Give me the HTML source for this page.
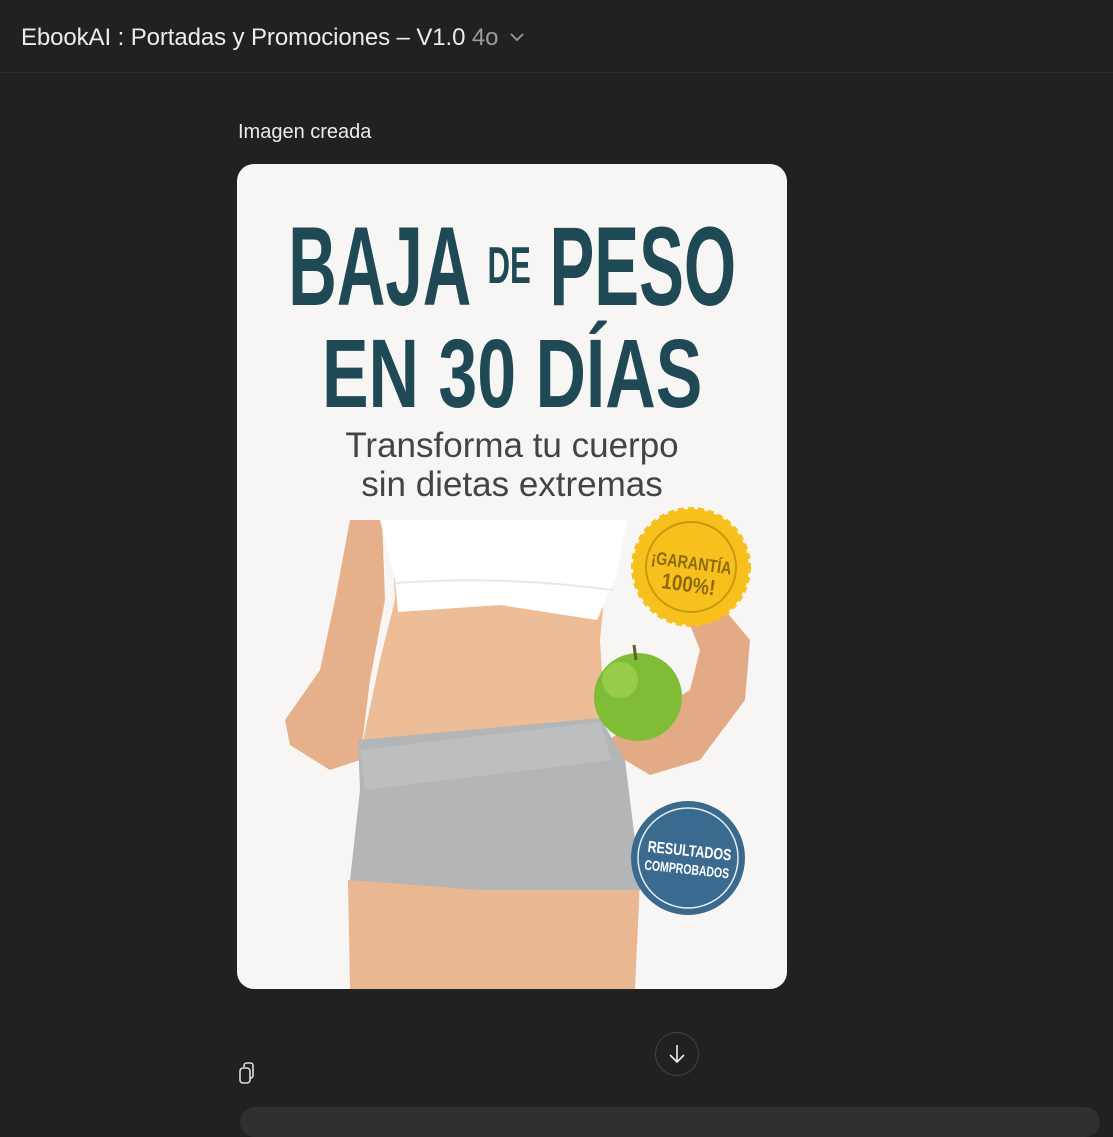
<!DOCTYPE html>
<html><head><meta charset="utf-8"><style>
body{margin:0;width:1113px;height:1113px;background:#212121;overflow:hidden;font-family:"Liberation Sans",sans-serif;position:relative}
.hdr{position:absolute;left:0;top:0;width:1113px;height:72px;border-bottom:1px solid #2e2e2e}
.t{position:absolute;left:21px;top:24px;color:#ececec;font-size:24px;letter-spacing:-0.1px}
.t span{color:#9b9b9b}
.lbl{position:absolute;left:238px;top:121px;color:#ececec;font-size:20px}
.card{position:absolute;left:237px;top:164px;width:550px;height:825px;border-radius:17px;background:#f7f6f4;overflow:hidden}
.h{position:absolute;left:-300px;width:1150px;text-align:center;color:#1f4a55;font-weight:bold;white-space:nowrap}
.h span.i{display:inline-block}
.sub{position:absolute;left:0;width:550px;text-align:center;color:#444;font-size:35px;line-height:39px;top:262px}
.input{position:absolute;left:240px;top:1107px;width:860px;height:30px;border-radius:16px;background:#303030}
</style></head><body>
<div class="hdr"><div class="t">EbookAI : Portadas y Promociones – V1.0 <span>4o</span> <svg width="16" height="10" style="margin-left:4px;vertical-align:3px" viewBox="0 0 16 10"><path d="M2 2l6 6 6-6" stroke="#9b9b9b" stroke-width="1.8" fill="none"/></svg></div></div>
<div class="lbl">Imagen creada</div>
<div class="card">
 <div class="h" style="top:46px;font-size:112px;line-height:112px"><span class="i" style="transform:scaleX(0.6)">BAJA <span style="font-size:52px;vertical-align:22px">DE</span> PESO</span></div>
 <div class="h" style="top:161px;font-size:97px;line-height:97px"><span class="i" style="transform:scaleX(0.72)">EN 30 DÍAS</span></div>
 <div class="sub">Transforma tu cuerpo<br>sin dietas extremas</div>
 <svg width="550" height="825" viewBox="237 164 550 825" style="position:absolute;left:0;top:0">
  <path d="M350 520 L382 520 L385 600 L370 680 L360 760 L330 770 L290 745 L285 720 L320 670 L335 600 Z" fill="#e6b08a"/>
  <path d="M680 600 L725 610 L750 640 L745 700 L700 760 L650 775 L600 745 L640 720 L690 690 L700 650 Z" fill="#e2aa85"/>
  <path d="M392 520 L612 520 L600 640 L605 720 L360 755 L380 660 L395 600 Z" fill="#edbd98"/>
  <path d="M348 880 L640 880 L635 989 L350 989 Z" fill="#e9b792"/>
  <path d="M380 520 L627 520 L615 580 L597 620 L500 605 L398 612 L395 580 Z" fill="#ffffff"/>
  <path d="M396 583 Q500 575 613 590" stroke="#e8e8e8" stroke-width="2" fill="none"/>
  <path d="M358 740 L600 718 L625 760 L640 880 L640 890 L480 890 L350 880 L360 790 Z" fill="#b4b5b7"/>
  <path d="M360 750 L600 722 L612 760 L365 790 Z" fill="#bdbec0"/>
  <circle cx="638" cy="697" r="44" fill="#7fbd36"/>
  <circle cx="620" cy="680" r="18" fill="#a6d65a" opacity=".6"/>
  <path d="M636 660 L634 645" stroke="#6a5a20" stroke-width="3"/>
  <circle cx="691" cy="567" r="58" fill="#f8c01c" stroke="#f8c01c" stroke-width="4" stroke-dasharray="6 4"/>
  <circle cx="691" cy="567" r="45" fill="none" stroke="#c49a10" stroke-width="2"/>
  <text x="691" y="569" text-anchor="middle" font-family="Liberation Sans Narrow,Liberation Sans,sans-serif" font-weight="bold" font-size="18" fill="#8a6a10" transform="rotate(8 691 567) translate(691 0) scale(0.8 1) translate(-691 0)">¡GARANTÍA</text>
  <text x="691" y="592" text-anchor="middle" font-family="Liberation Sans Narrow,Liberation Sans,sans-serif" font-weight="bold" font-size="22" fill="#8a6a10" transform="rotate(8 691 567) translate(691 0) scale(0.85 1) translate(-691 0)">100%!</text>
  <circle cx="688" cy="858" r="57" fill="#3b6a8f"/>
  <circle cx="688" cy="858" r="50" fill="none" stroke="#e8eef4" stroke-width="1.5"/>
  <text x="689" y="856" text-anchor="middle" font-family="Liberation Sans Narrow,Liberation Sans,sans-serif" font-weight="bold" font-size="16" fill="#fff" transform="rotate(6 688 858) translate(688 0) scale(0.78 1) translate(-688 0)">RESULTADOS</text>
  <text x="688" y="874" text-anchor="middle" font-family="Liberation Sans Narrow,Liberation Sans,sans-serif" font-weight="bold" font-size="14" fill="#fff" transform="rotate(6 688 858) translate(688 0) scale(0.75 1) translate(-688 0)">COMPROBADOS</text>
 </svg>
</div>
<svg style="position:absolute;left:654px;top:1031px" width="46" height="46" viewBox="0 0 46 46"><circle cx="23" cy="23" r="21.5" fill="#212121" stroke="#444" stroke-width="1"/><path d="M23 14v17M16 24l7 7 7-7" stroke="#ececec" stroke-width="1.6" fill="none"/></svg>
<svg style="position:absolute;left:238px;top:1061px" width="26" height="26" viewBox="0 0 26 26"><rect x="2" y="7" width="10" height="15" rx="3" fill="none" stroke="#ddd" stroke-width="1.6"/><path d="M6 6V4.5a2.5 2.5 0 0 1 2.5-2.5h4a2.5 2.5 0 0 1 2.5 2.5v10a2.5 2.5 0 0 1-2.5 2.5H12" fill="none" stroke="#ddd" stroke-width="1.6"/></svg>
<div class="input"></div>
</body></html>
